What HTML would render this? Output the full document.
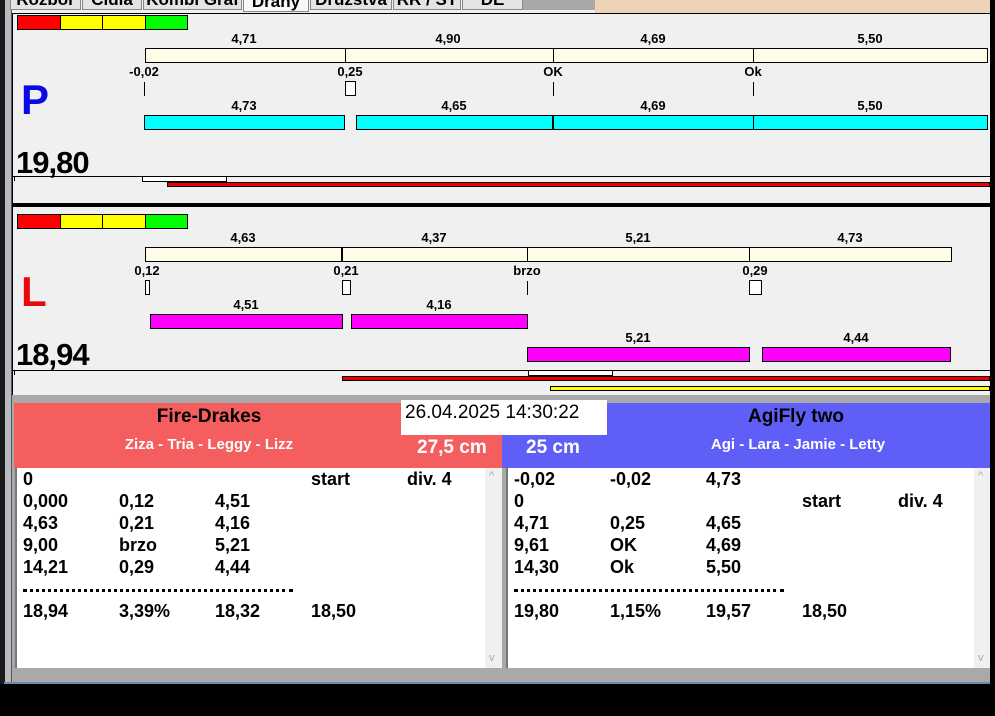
<!DOCTYPE html>
<html><head><meta charset="utf-8"><style>
*{margin:0;padding:0;box-sizing:border-box}
body{width:995px;height:716px;position:relative;overflow:hidden;background:#000;font-family:"Liberation Sans",Arial,sans-serif}
div,span{position:absolute}
.b{border:1px solid #000}
.t{font-size:13px;font-weight:bold;color:#000;transform:translateX(-50%);white-space:nowrap;line-height:13px}
.r{font-size:18px;font-weight:bold;line-height:20px;white-space:nowrap}
.tab{top:-10px;height:20px;border:1px solid #888;background:#e4e4e4;font-size:17px;font-weight:bold;line-height:17px;text-align:center;overflow:hidden;color:#000}
</style></head><body>
<div style="left:0;top:0;width:12px;height:684px;background:#1a1a1a"></div>
<div style="left:5px;top:0;width:7px;height:684px;background:#b8bcc0"></div>
<div style="left:11px;top:0;width:2px;height:684px;background:#555"></div>
<div style="left:12px;top:0;width:978px;height:14px;background:#f0f0f0"></div>
<div style="left:523px;top:0;width:72px;height:10px;background:#a8a8a8"></div>
<div style="left:595px;top:0;width:395px;height:13px;background:#eed2b6"></div>
<div class="tab" style="left:10px;width:71px">Rozbor</div>
<div class="tab" style="left:82px;width:60px">Cidla</div>
<div class="tab" style="left:143px;width:99px">Kombi Graf</div>
<div class="tab" style="left:243px;width:66px;background:#f8f8f8;top:-8px">Dráhy</div>
<div class="tab" style="left:310px;width:82px">Družstva</div>
<div class="tab" style="left:393px;width:68px">RR / ST</div>
<div class="tab" style="left:462px;width:61px">DE</div>
<div style="left:990px;top:0;width:5px;height:684px;background:#000"></div>
<div style="left:988px;top:14px;width:2px;height:390px;background:#3a8ad8"></div>

<div style="left:12px;top:13px;width:978px;height:190px;background:#f0f0f0;border-top:1px solid #000;border-left:1px solid #000"></div>
<div class="b" style="left:17px;top:15px;width:44px;height:15px;background:#f00"></div>
<div class="b" style="left:60px;top:15px;width:43px;height:15px;background:#ff0"></div>
<div class="b" style="left:102px;top:15px;width:44px;height:15px;background:#ff0"></div>
<div class="b" style="left:145px;top:15px;width:43px;height:15px;background:#0f0"></div>
<div class="b" style="left:145px;top:48px;width:843px;height:15px;background:#fffde8"></div>
<div style="left:345px;top:48px;width:1px;height:15px;background:#000"></div>
<div style="left:553px;top:48px;width:1px;height:15px;background:#000"></div>
<div style="left:753px;top:48px;width:1px;height:15px;background:#000"></div>
<span class="t" style="left:244px;top:32px">4,71</span>
<span class="t" style="left:448px;top:32px">4,90</span>
<span class="t" style="left:653px;top:32px">4,69</span>
<span class="t" style="left:870px;top:32px">5,50</span>
<span class="t" style="left:144px;top:65px">-0,02</span>
<span class="t" style="left:350px;top:65px">0,25</span>
<span class="t" style="left:553px;top:65px">OK</span>
<span class="t" style="left:753px;top:65px">Ok</span>
<div style="left:144px;top:82px;width:1px;height:14px;background:#000"></div>
<div class="b" style="left:345px;top:81px;width:11px;height:15px;background:#fff"></div>
<div style="left:553px;top:82px;width:1px;height:14px;background:#000"></div>
<div style="left:753px;top:82px;width:1px;height:14px;background:#000"></div>
<span class="t" style="left:244px;top:99px">4,73</span>
<span class="t" style="left:454px;top:99px">4,65</span>
<span class="t" style="left:653px;top:99px">4,69</span>
<span class="t" style="left:870px;top:99px">5,50</span>
<div class="b" style="left:144px;top:115px;width:201px;height:15px;background:#0ff"></div>
<div class="b" style="left:356px;top:115px;width:632px;height:15px;background:#0ff"></div>
<div style="left:552px;top:115px;width:2px;height:15px;background:#000"></div>
<div style="left:753px;top:115px;width:1px;height:15px;background:#000"></div>
<span style="left:21px;top:76px;font-size:42px;font-weight:bold;color:#0a0ae6;line-height:48px">P</span>
<span style="left:16px;top:147px;font-size:31px;font-weight:bold;line-height:32px;letter-spacing:-1px">19,80</span>
<div style="left:13px;top:176px;width:977px;height:1px;background:#000"></div>
<div style="left:14px;top:176px;width:1px;height:5px;background:#000"></div>
<div class="b" style="left:142px;top:176px;width:85px;height:6px;background:#fff"></div>
<div class="b" style="left:167px;top:182px;width:823px;height:5px;background:#e00"></div>
<div style="left:12px;top:203px;width:978px;height:4px;background:#000"></div>

<div style="left:12px;top:207px;width:978px;height:188px;background:#f0f0f0;border-left:1px solid #000"></div>
<div class="b" style="left:17px;top:214px;width:44px;height:15px;background:#f00"></div>
<div class="b" style="left:60px;top:214px;width:43px;height:15px;background:#ff0"></div>
<div class="b" style="left:102px;top:214px;width:44px;height:15px;background:#ff0"></div>
<div class="b" style="left:145px;top:214px;width:43px;height:15px;background:#0f0"></div>
<div class="b" style="left:145px;top:247px;width:807px;height:15px;background:#fffde8"></div>
<div style="left:341px;top:247px;width:2px;height:15px;background:#000"></div>
<div style="left:527px;top:247px;width:1px;height:15px;background:#000"></div>
<div style="left:749px;top:247px;width:1px;height:15px;background:#000"></div>
<span class="t" style="left:243px;top:231px">4,63</span>
<span class="t" style="left:434px;top:231px">4,37</span>
<span class="t" style="left:638px;top:231px">5,21</span>
<span class="t" style="left:850px;top:231px">4,73</span>
<span class="t" style="left:147px;top:264px">0,12</span>
<span class="t" style="left:346px;top:264px">0,21</span>
<span class="t" style="left:527px;top:264px">brzo</span>
<span class="t" style="left:755px;top:264px">0,29</span>
<div class="b" style="left:145px;top:280px;width:5px;height:15px;background:#fff"></div>
<div class="b" style="left:342px;top:280px;width:9px;height:15px;background:#fff"></div>
<div style="left:527px;top:281px;width:1px;height:14px;background:#000"></div>
<div class="b" style="left:749px;top:280px;width:13px;height:15px;background:#fff"></div>
<span class="t" style="left:246px;top:298px">4,51</span>
<span class="t" style="left:439px;top:298px">4,16</span>
<div class="b" style="left:150px;top:314px;width:193px;height:15px;background:#f0f"></div>
<div class="b" style="left:351px;top:314px;width:177px;height:15px;background:#f0f"></div>
<span class="t" style="left:638px;top:331px">5,21</span>
<span class="t" style="left:856px;top:331px">4,44</span>
<div class="b" style="left:527px;top:347px;width:223px;height:15px;background:#f0f"></div>
<div class="b" style="left:762px;top:347px;width:189px;height:15px;background:#f0f"></div>
<span style="left:21px;top:268px;font-size:42px;font-weight:bold;color:#e60a0a;line-height:48px">L</span>
<span style="left:16px;top:339px;font-size:31px;font-weight:bold;line-height:32px;letter-spacing:-1px">18,94</span>
<div style="left:13px;top:370px;width:977px;height:1px;background:#000"></div>
<div style="left:14px;top:370px;width:1px;height:5px;background:#000"></div>
<div class="b" style="left:528px;top:370px;width:85px;height:6px;background:#fff"></div>
<div class="b" style="left:342px;top:376px;width:648px;height:5px;background:#e00"></div>
<div class="b" style="left:550px;top:386px;width:440px;height:5px;background:#ff0"></div>

<div style="left:12px;top:395px;width:978px;height:289px;background:#a9a9a9"></div>
<div style="left:14px;top:403px;width:488px;height:65px;background:#f55e5e"></div>
<div style="left:502px;top:403px;width:488px;height:65px;background:#5f5ff8"></div>
<div style="left:401px;top:400px;width:206px;height:35px;background:#fff;font-size:19px;line-height:24px;padding-left:4px;padding-top:1px">26.04.2025 14:30:22</div>
<span style="left:209px;top:406px;transform:translateX(-50%);font-size:19px;font-weight:bold">Fire-Drakes</span>
<span style="left:209px;top:436px;transform:translateX(-50%);font-size:15px;font-weight:bold;color:#fff">Ziza - Tria - Leggy - Lizz</span>
<span style="left:417px;top:437px;font-size:19px;font-weight:bold;color:#fff">27,5 cm</span>
<span style="left:526px;top:437px;font-size:19px;font-weight:bold;color:#fff">25 cm</span>
<span style="left:796px;top:406px;transform:translateX(-50%);font-size:19px;font-weight:bold">AgiFly two</span>
<span style="left:798px;top:436px;transform:translateX(-50%);font-size:15px;font-weight:bold;color:#fff">Agi - Lara - Jamie - Letty</span>

<div style="left:15px;top:468px;width:487px;height:200px;background:#fff;border-left:2px solid #777"></div>
<div style="left:485px;top:468px;width:17px;height:200px;background:#f0f0f0;color:#aaa;font-size:11px;text-align:center"><span style="left:4px;top:2px">^</span><span style="left:4px;top:184px">v</span></div>
<div style="left:506px;top:468px;width:484px;height:200px;background:#fff;border-left:2px solid #777"></div>
<div style="left:974px;top:468px;width:16px;height:200px;background:#f0f0f0;color:#aaa;font-size:11px"><span style="left:4px;top:2px">^</span><span style="left:4px;top:184px">v</span></div>

<span class="r" style="left:23px;top:469px">0</span><span class="r" style="left:311px;top:469px">start</span><span class="r" style="left:407px;top:469px">div. 4</span>
<span class="r" style="left:23px;top:491px">0,000</span><span class="r" style="left:119px;top:491px">0,12</span><span class="r" style="left:215px;top:491px">4,51</span>
<span class="r" style="left:23px;top:513px">4,63</span><span class="r" style="left:119px;top:513px">0,21</span><span class="r" style="left:215px;top:513px">4,16</span>
<span class="r" style="left:23px;top:535px">9,00</span><span class="r" style="left:119px;top:535px">brzo</span><span class="r" style="left:215px;top:535px">5,21</span>
<span class="r" style="left:23px;top:557px">14,21</span><span class="r" style="left:119px;top:557px">0,29</span><span class="r" style="left:215px;top:557px">4,44</span>
<div style="left:23px;top:589px;width:270px;height:0;border-top:3px dotted #000"></div>
<span class="r" style="left:23px;top:601px">18,94</span><span class="r" style="left:119px;top:601px">3,39%</span><span class="r" style="left:215px;top:601px">18,32</span><span class="r" style="left:311px;top:601px">18,50</span>
<span class="r" style="left:514px;top:469px">-0,02</span><span class="r" style="left:610px;top:469px">-0,02</span><span class="r" style="left:706px;top:469px">4,73</span>
<span class="r" style="left:514px;top:491px">0</span><span class="r" style="left:802px;top:491px">start</span><span class="r" style="left:898px;top:491px">div. 4</span>
<span class="r" style="left:514px;top:513px">4,71</span><span class="r" style="left:610px;top:513px">0,25</span><span class="r" style="left:706px;top:513px">4,65</span>
<span class="r" style="left:514px;top:535px">9,61</span><span class="r" style="left:610px;top:535px">OK</span><span class="r" style="left:706px;top:535px">4,69</span>
<span class="r" style="left:514px;top:557px">14,30</span><span class="r" style="left:610px;top:557px">Ok</span><span class="r" style="left:706px;top:557px">5,50</span>
<div style="left:514px;top:589px;width:270px;height:0;border-top:3px dotted #000"></div>
<span class="r" style="left:514px;top:601px">19,80</span><span class="r" style="left:610px;top:601px">1,15%</span><span class="r" style="left:706px;top:601px">19,57</span><span class="r" style="left:802px;top:601px">18,50</span>

<div style="left:4px;top:682px;width:986px;height:2px;background:#6a8cb0"></div>
</body></html>
